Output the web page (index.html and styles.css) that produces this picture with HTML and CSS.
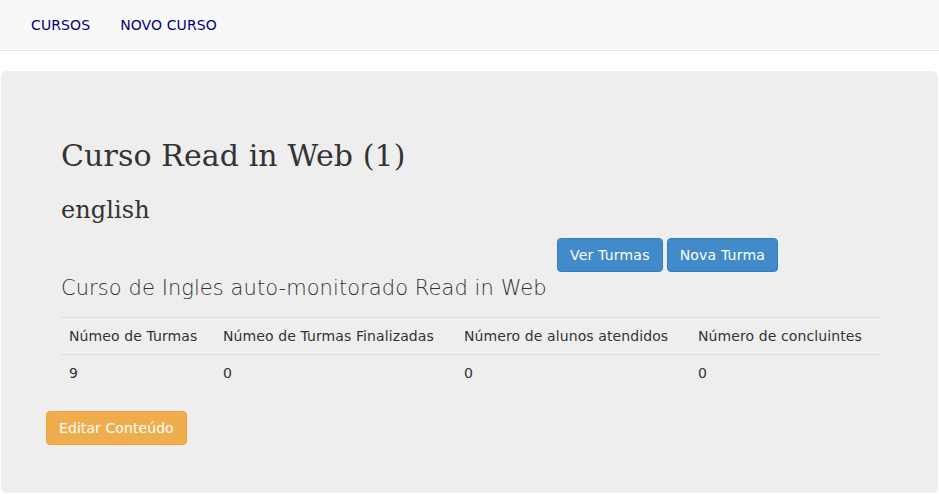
FILE: index.html
```html
<!DOCTYPE html>
<html lang="pt">
<head>
<meta charset="utf-8">
<title>Curso Read in Web</title>
<link rel="stylesheet" href="styles.css">
</head>
<body>
<nav class="navbar">
  <a class="nav-link" href="#">CURSOS</a>
  <a class="nav-link" href="#">NOVO CURSO</a>
</nav>
<main class="jumbotron">
  <h2 class="title">Curso Read in Web (1)</h2>
  <h3 class="subtitle">english</h3>
  <div class="actions">
    <a class="btn btn-primary" href="#">Ver Turmas</a>
    <a class="btn btn-primary" href="#">Nova Turma</a>
  </div>
  <p class="lead">Curso de Ingles auto-monitorado Read in Web</p>
  <table class="stats">
    <thead>
      <tr>
        <th class="c1">Númeo de Turmas</th>
        <th class="c2">Númeo de Turmas Finalizadas</th>
        <th class="c3">Número de alunos atendidos</th>
        <th class="c4">Número de concluintes</th>
      </tr>
    </thead>
    <tbody>
      <tr>
        <td>9</td>
        <td>0</td>
        <td>0</td>
        <td>0</td>
      </tr>
    </tbody>
  </table>
  <div class="edit-row">
    <a class="btn btn-warning" href="#">Editar Conteúdo</a>
  </div>
</main>
</body>
</html>
```
FILE: styles.css
```css
* { box-sizing: border-box; }
html, body { margin: 0; padding: 0; }
body {
  font-family: "DejaVu Sans", sans-serif;
  font-size: 14px;
  line-height: 20px;
  letter-spacing: 0.1px;
  color: #333;
  background: #fff;
}
.navbar {
  display: flex;
  height: 51px;
  background: #f8f8f8;
  border-bottom: 1px solid #e7e7e7;
  padding-left: 16px;
  margin-bottom: 20px;
}
.nav-link {
  display: block;
  padding: 15px 15px;
  line-height: 20px;
  color: #000080;
  text-decoration: none;
}
.jumbotron {
  margin: 0 1px;
  background: #eee;
  border-radius: 6px;
  padding: 48px 59px 48px 60px;
  height: 422px;
}
.title {
  font-family: "DejaVu Serif", serif;
  font-weight: 400;
  font-size: 30px;
  line-height: 33px;
  margin: 20px 0 0;
  color: #333;
}
.subtitle {
  font-family: "DejaVu Serif", serif;
  font-weight: 400;
  font-size: 24px;
  line-height: 26px;
  margin: 25px 0 0;
  color: #333;
}
.actions {
  display: flex;
  gap: 4px;
  padding-left: 496px;
  margin-top: 15px;
}
.btn {
  display: inline-block;
  padding: 6px 12px;
  font-size: 14px;
  line-height: 20px;
  letter-spacing: 0.2px;
  border: 1px solid transparent;
  border-radius: 4px;
  color: #fff;
  text-decoration: none;
  white-space: nowrap;
}
.btn-primary { background: #428bca; border-color: #357ebd; }
.btn-warning { background: #f0ad4e; border-color: #eea236; letter-spacing: 0.08px; }
.lead {
  font-size: 21px;
  font-weight: 200;
  line-height: 30px;
  letter-spacing: 0.07px;
  margin: 1px 0 14px;
  color: #333;
}
.stats {
  width: 819px;
  border-collapse: collapse;
  border-spacing: 0;
  margin-bottom: 20px;
}
.stats th, .stats td {
  padding: 8px;
  line-height: 20px;
  text-align: left;
  vertical-align: top;
  border-top: 1px solid #ddd;
  font-weight: 400;
}
.stats .c1 { width: 154px; }
.stats .c2 { width: 241px; }
.stats .c3 { width: 234px; }
.stats .c4 { width: 190px; }
.edit-row { margin-left: -15px; }
```
